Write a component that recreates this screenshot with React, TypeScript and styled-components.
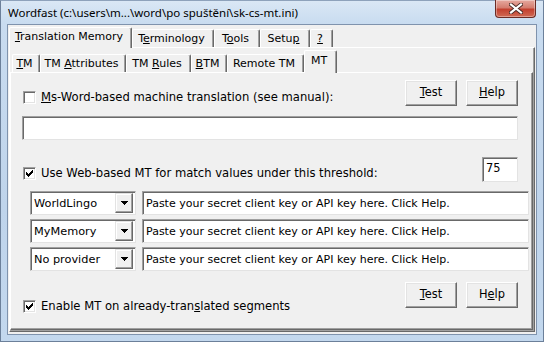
import React from "react";
import styled, { createGlobalStyle, css } from "styled-components";

const GlobalStyle = createGlobalStyle`
  html, body {
    margin: 0;
    padding: 0;
    width: 544px;
    height: 342px;
    overflow: hidden;
    background: #c4d8ee;
  }
  * {
    box-sizing: border-box;
  }
`;

const UI_FONT = `"DejaVu Sans", "Liberation Sans", sans-serif`;

const Window = styled.div`
  width: 544px;
  height: 342px;
  display: flex;
  flex-direction: column;
  padding: 0 6px 6px;
  border: 1px solid #6c809a;
  border-top-color: #8ea2bb;
  background: linear-gradient(
    to bottom,
    #dae7f5 0px,
    #c9dcf0 22px,
    #bfd4eb 60%,
    #c3d8ee 100%
  );
`;

const TitleBar = styled.div`
  height: 23px;
  display: flex;
  align-items: flex-start;
  padding-left: 1px;
`;

const Title = styled.div`
  margin-top: 4px;
  font-family: "Noto Sans", "Open Sans", sans-serif;
  font-size: 11.5px;
  line-height: 15px;
  color: #000;
  white-space: nowrap;
`;

const CloseButton = styled.div`
  margin-left: auto;
  margin-top: -1px;
  margin-right: 1px;
  width: 41px;
  height: 18px;
  display: flex;
  align-items: center;
  justify-content: center;
  border: 1px solid #6b2b24;
  border-top: none;
  border-radius: 0 0 4px 4px;
  background: linear-gradient(
    to bottom,
    #e6a99f 0%,
    #d47d6f 45%,
    #c3402f 55%,
    #d06a54 100%
  );
  box-shadow: inset 0 0 0 1px rgba(255, 255, 255, 0.35);
`;

const Client = styled.div`
  flex: 1;
  display: flex;
  flex-direction: column;
  border: 1px solid #7f93ad;
  background: #f0f0f0;
  font-family: ${UI_FONT};
  font-size: 11px;
  color: #000;
`;

const TabStrip = styled.div<{ $h: number; $pad: number }>`
  height: ${(p) => p.$h}px;
  margin-top: 2px;
  padding-left: ${(p) => p.$pad}px;
  display: flex;
  align-items: flex-end;
  position: relative;
  z-index: 1;
`;

const Tab = styled.div<{ $w: number; $h: number; $sel?: boolean; $lift?: number }>`
  width: ${(p) => p.$w}px;
  height: ${(p) => p.$h}px;
  display: flex;
  align-items: center;
  justify-content: center;
  padding-right: 3px;
  padding-bottom: ${(p) => p.$lift ?? 0}px;
  background: #f0f0f0;
  border-top: 1px solid #fff;
  border-left: 1px solid #fff;
  border-right: 1px solid #696969;
  border-radius: 2px 2px 0 0;
  box-shadow: inset -1px 0 #a0a0a0;
  line-height: 14px;
  white-space: nowrap;
  ${(p) =>
    p.$sel &&
    css`
      margin-bottom: -1px;
    `}
`;

const Panel = styled.div<{ $m: string }>`
  flex: 1;
  display: flex;
  flex-direction: column;
  margin: ${(p) => p.$m};
  border: 1px solid;
  border-color: #fff #696969 #696969 #fff;
  box-shadow: inset -1px -1px #a0a0a0;
`;

const Content = styled.div`
  display: flex;
  flex-direction: column;
  padding: 7px 3px 0 11px;
`;

const Row = styled.div<{ $mt?: number; $mr?: number }>`
  display: flex;
  align-items: flex-start;
  margin-top: ${(p) => p.$mt ?? 0}px;
  margin-right: ${(p) => p.$mr ?? 0}px;
`;

const CheckLabel = styled.label<{ $mt: number }>`
  display: flex;
  align-items: center;
  gap: 5px;
  margin-top: ${(p) => p.$mt}px;
  margin-left: 1px;
  font-size: 11.6px;
  line-height: 13px;
  white-space: nowrap;
`;

const Box = styled.span`
  width: 13px;
  height: 13px;
  flex: none;
  display: flex;
  align-items: center;
  justify-content: center;
  background: #fff;
  border: 1px solid;
  border-color: #a0a0a0 #fff #fff #a0a0a0;
  box-shadow: inset 1px 1px #696969, inset -1px -1px #e3e3e3;
`;

const ButtonGroup = styled.div`
  margin-left: auto;
  display: flex;
  gap: 9px;
`;

const Button = styled.div`
  width: 52px;
  height: 26px;
  display: flex;
  align-items: center;
  justify-content: center;
  padding-bottom: 2px;
  font-size: 11.4px;
  background: #f0f0f0;
  border: 1px solid;
  border-color: #fff #696969 #696969 #fff;
  box-shadow: inset -1px -1px #a0a0a0, inset 1px 1px #e3e3e3;
`;

const Field = styled.div<{ $w?: number; $h?: number; $mt?: number; $mr?: number }>`
  flex: ${(p) => (p.$w ? "none" : "1 1 auto")};
  width: ${(p) => (p.$w ? `${p.$w}px` : "auto")};
  min-width: 0;
  height: ${(p) => p.$h ?? 24}px;
  margin-top: ${(p) => p.$mt ?? 0}px;
  margin-right: ${(p) => p.$mr ?? 0}px;
  display: flex;
  align-items: center;
  padding: 0 3px;
  background: #fff;
  border: 1px solid;
  border-color: #a0a0a0 #e3e3e3 #e3e3e3 #a0a0a0;
  box-shadow: inset 1px 1px #696969;
  white-space: nowrap;
  overflow: hidden;
`;

const NumberField = styled(Field)`
  align-items: flex-start;
  padding-top: 3px;
  margin-left: auto;
  font-size: 11.4px;
`;

const ProviderList = styled.div`
  display: flex;
  flex-direction: column;
  gap: 4px;
  margin-top: 9px;
  padding-left: 8px;
`;

const ProviderRow = styled.div`
  display: flex;
  gap: 6px;
`;

const Combo = styled(Field)`
  padding: 0 2px 0 3px;
  justify-content: space-between;
  font-size: 11.3px;
`;

const DropButton = styled.span`
  width: 18px;
  height: 20px;
  display: flex;
  align-items: center;
  justify-content: center;
  background: #f0f0f0;
  border: 1px solid;
  border-color: #e3e3e3 #696969 #696969 #e3e3e3;
  box-shadow: inset -1px -1px #a0a0a0, inset 1px 1px #fff;
`;

const Check = () => (
  <svg width="7" height="7" viewBox="0 0 7 7" shapeRendering="crispEdges">
    <path
      d="M6 0h1v3h-1v1h-1v1h-1v1h-1v1h-1v-1h-1v-1h-1v-3h1v1h1v1h1v-1h1v-1h1z"
      fill="#000"
    />
  </svg>
);

const Arrow = () => (
  <svg width="7" height="4" viewBox="0 0 7 4" shapeRendering="crispEdges">
    <path d="M0 0h7v1h-1v1h-1v1h-1v1h-1v-1h-1v-1h-1v-1h-1z" fill="#000" />
  </svg>
);

const CloseGlyph = () => (
  <svg width="14" height="11" viewBox="0 0 14 11">
    <path
      d="M2 1.5 L12 9.5 M12 1.5 L2 9.5"
      stroke="#4a2a26"
      strokeWidth="4"
      strokeLinecap="square"
    />
    <path
      d="M2 1.5 L12 9.5 M12 1.5 L2 9.5"
      stroke="#fff"
      strokeWidth="2.2"
      strokeLinecap="square"
    />
  </svg>
);

const providers = ["WorldLingo", "MyMemory", "No provider"];

export default function App() {
  return (
    <>
      <GlobalStyle />
      <Window>
        <TitleBar>
          <Title>Wordfast (c:\users\m...\word\po spuštění\sk-cs-mt.ini)</Title>
          <CloseButton>
            <CloseGlyph />
          </CloseButton>
        </TitleBar>
        <Client>
          <TabStrip $h={20} $pad={1}>
            <Tab $w={123} $h={21} $sel $lift={3}>
              <span>
                <u>T</u>ranslation Memory
              </span>
            </Tab>
            <Tab $w={82} $h={18}>
              <span>
                T<u>e</u>rminology
              </span>
            </Tab>
            <Tab $w={46} $h={18}>
              <span>
                T<u>o</u>ols
              </span>
            </Tab>
            <Tab $w={50} $h={18}>
              <span>
                Setu<u>p</u>
              </span>
            </Tab>
            <Tab $w={23} $h={18}>
              <u>?</u>
            </Tab>
          </TabStrip>
          <Panel $m="0 1px 2px 1px">
            <TabStrip $h={22} $pad={2}>
              <Tab $w={28} $h={18}>
                <span>
                  <u>T</u>M
                </span>
              </Tab>
              <Tab $w={86} $h={18}>
                <span>
                  TM <u>A</u>ttributes
                </span>
              </Tab>
              <Tab $w={65} $h={18}>
                <span>
                  TM <u>R</u>ules
                </span>
              </Tab>
              <Tab $w={36} $h={18}>
                <span>
                  <u>B</u>TM
                </span>
              </Tab>
              <Tab $w={77} $h={18}>
                Remote TM
              </Tab>
              <Tab $w={33} $h={23} $sel $lift={2}>
                MT
              </Tab>
            </TabStrip>
            <Panel $m="0 1px 1px 0">
              <Content>
                <Row $mr={11}>
                  <CheckLabel $mt={11}>
                    <Box />
                    <span>
                      <u>M</u>s-Word-based machine translation (see manual):
                    </span>
                  </CheckLabel>
                  <ButtonGroup>
                    <Button>
                      <span>
                        <u>T</u>est
                      </span>
                    </Button>
                    <Button>
                      <span>
                        <u>H</u>elp
                      </span>
                    </Button>
                  </ButtonGroup>
                </Row>
                <Field $mt={10} $mr={11} />
                <Row $mt={17} $mr={11}>
                  <CheckLabel $mt={10}>
                    <Box>
                      <Check />
                    </Box>
                    <span>Use Web-based MT for match values under this threshold:</span>
                  </CheckLabel>
                  <NumberField $w={36} $h={25}>
                    75
                  </NumberField>
                </Row>
                <ProviderList>
                  {providers.map((name) => (
                    <ProviderRow key={name}>
                      <Combo $w={106}>
                        <span>{name}</span>
                        <DropButton>
                          <Arrow />
                        </DropButton>
                      </Combo>
                      <Field>Paste your secret client key or API key here. Click Help.</Field>
                    </ProviderRow>
                  ))}
                </ProviderList>
                <Row $mt={11} $mr={11}>
                  <CheckLabel $mt={18}>
                    <Box>
                      <Check />
                    </Box>
                    <span>
                      Enable MT on already-tran<u>s</u>lated segments
                    </span>
                  </CheckLabel>
                  <ButtonGroup>
                    <Button>
                      <span>
                        <u>T</u>est
                      </span>
                    </Button>
                    <Button>
                      <span>
                        H<u>e</u>lp
                      </span>
                    </Button>
                  </ButtonGroup>
                </Row>
              </Content>
            </Panel>
          </Panel>
        </Client>
      </Window>
    </>
  );
}
